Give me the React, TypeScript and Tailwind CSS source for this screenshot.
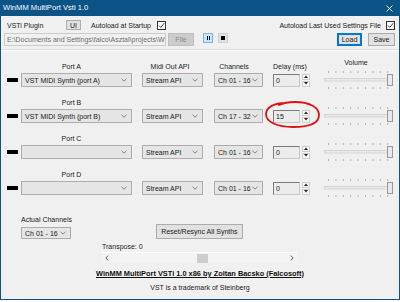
import React from "react";

const ports = [
  { name: "Port A", synth: "VST MIDI Synth (port A)", ch: "Ch 01 - 16", delay: "0" },
  { name: "Port B", synth: "VST MIDI Synth (port B)", ch: "Ch 17 - 32", delay: "15" },
  { name: "Port C", synth: "", ch: "Ch 01 - 16", delay: "0" },
  { name: "Port D", synth: "", ch: "Ch 01 - 16", delay: "0" },
];

function Chevron() {
  return (
    <svg width="6" height="4" viewBox="0 0 6 4" className="shrink-0">
      <path d="M0.5 0.8 L3 3.2 L5.5 0.8" fill="none" stroke="#6a6a6a" strokeWidth="0.8" />
    </svg>
  );
}

function Combo({ text, className }: { text: string; className: string }) {
  return (
    <div
      className={
        "flex items-center justify-between border border-[#adadad] bg-[#e5e5e5] pl-[3px] pr-[4px] text-[#1a1a1a] " +
        className
      }
    >
      <span className="whitespace-nowrap">{text}</span>
      <Chevron />
    </div>
  );
}

function Check() {
  return (
    <div className="flex h-[9px] w-[9px] items-center justify-center border border-[#333] bg-white">
      <svg width="7" height="7" viewBox="0 0 7 7">
        <path d="M1 3.6 L2.8 5.4 L6.2 1.2" fill="none" stroke="#222" strokeWidth="0.9" />
      </svg>
    </div>
  );
}

function Spin() {
  return (
    <div className="ml-[2px] flex h-[13px] w-[8px] flex-col gap-px">
      <div className="flex flex-1 items-center justify-center border border-[#d0d0d0] bg-[#f4f4f4]">
        <svg width="4" height="3" viewBox="0 0 4 3">
          <path d="M0 3 L2 0.5 L4 3 Z" fill="#222" />
        </svg>
      </div>
      <div className="flex flex-1 items-center justify-center border border-[#d0d0d0] bg-[#f4f4f4]">
        <svg width="4" height="3" viewBox="0 0 4 3">
          <path d="M0 0 L2 2.5 L4 0 Z" fill="#222" />
        </svg>
      </div>
    </div>
  );
}

function Slider() {
  const ticks = Array.from({ length: 9 }, (_, i) => 5 + i * 7.4);
  return (
    <svg width="70" height="18" viewBox="0 0 70 18" className="ml-[13px] -my-[2px] shrink-0">
      {ticks.map((x) => (
        <g key={x}>
          <rect x={x} y="0" width="1" height="2" fill="#b4b4b4" />
          <rect x={x} y="16" width="1" height="2" fill="#b4b4b4" />
        </g>
      ))}
      <rect x="1.5" y="7.5" width="64" height="2.5" fill="#e7eaea" stroke="#d6d6d6" strokeWidth="1" />
      <rect x="64.5" y="3.5" width="5" height="11" fill="#e8e8e8" stroke="#9a9a9a" strokeWidth="1" />
    </svg>
  );
}

function PortRow({ p }: { p: (typeof ports)[number] }) {
  return (
    <div className="flex h-[14px] items-center">
      <div className="ml-[6px] h-[4px] w-[11px] bg-black" />
      <Combo text={p.synth} className="ml-[3px] h-[14px] w-[111px]" />
      <Combo text="Stream API" className="ml-[10px] h-[14px] w-[61px]" />
      <Combo text={p.ch} className="ml-[11px] h-[14px] w-[49px]" />
      <div className="ml-[10px] flex h-[13px] w-[27px] items-center border border-[#7a7a7a] border-r-[#c8c8c8] border-b-[#c8c8c8] bg-[#ececec] pl-[2px]">
        {p.delay}
      </div>
      <Spin />
      <Slider />
    </div>
  );
}

export default function App() {
  return (
    <div className="h-[302px] w-[400px] bg-white font-['Liberation_Sans',Arial,sans-serif] text-[7px] leading-none text-[#1a1a1a]">
      <div className="flex h-[300px] w-[400px] flex-col bg-[#0c5386] px-[1px] pb-[1px]">
        {/* title bar */}
        <div className="flex h-[16px] shrink-0 items-center justify-between pl-[2px] pr-[6px] text-[7.6px] text-white">
          <span>WinMM MultiPort Vsti 1.0</span>
          <svg width="7" height="7" viewBox="0 0 7 7">
            <path d="M0.5 0.5 L6.5 6.5 M6.5 0.5 L0.5 6.5" stroke="#fff" strokeWidth="0.9" />
          </svg>
        </div>

        <div className="relative flex flex-1 flex-col bg-[#f0f0f0]">
          {/* plugin row */}
          <div className="mt-[3px] flex h-[12px] items-center pl-[6px] pr-[4px]">
            <span className="w-[59px]">VSTi Plugin</span>
            <div className="flex h-[10px] w-[15px] items-center justify-center border border-[#adadad] bg-[#e1e1e1]">UI</div>
            <span className="ml-[10px] w-[62px] whitespace-nowrap">Autoload at Startup</span>
            <div className="ml-[4px]">
              <Check />
            </div>
            <div className="flex-1" />
            <span className="whitespace-nowrap">Autoload Last Used Settings File</span>
            <div className="ml-[5px]">
              <Check />
            </div>
          </div>

          {/* path row */}
          <div className="mt-[2px] flex h-[13px] items-center pl-[3px] pr-[4px]">
            <div className="flex h-[13px] w-[162px] items-center overflow-hidden whitespace-nowrap border border-[#cccccc] bg-[#f0f0f0] pl-[2px] text-[#6d6d6d]">
              E:\Documents and Settings\falco\Asztal\projects\W
            </div>
            <div className="ml-[2px] flex h-[13px] w-[26px] items-center justify-center border border-[#bfbfbf] bg-[#cccccc] text-[#8a8a8a]">
              File
            </div>
            <div className="ml-[9px] flex h-[10px] w-[10px] items-center justify-center gap-px self-start border border-[#7eb4ea] bg-[#cce4f7]">
              <div className="h-[4px] w-px bg-black" />
              <div className="h-[4px] w-px bg-black" />
            </div>
            <div className="ml-[5px] flex h-[10px] w-[10px] items-center justify-center self-start border border-[#d0d0d0] bg-[#e1e1e1]">
              <div className="h-[4px] w-[4px] bg-black" />
            </div>
            <div className="flex-1" />
            <div className="flex h-[13px] w-[25px] items-center justify-center border border-[#0078d7] bg-[#e1e1e1] shadow-[inset_0_0_0_1px_#0078d7]">
              Load
            </div>
            <div className="ml-[6px] flex h-[13px] w-[27px] items-center justify-center border border-[#adadad] bg-[#e1e1e1]">
              Save
            </div>
          </div>

          <div className="mt-[3px] h-px bg-[#dadada]" />
          <div className="h-px bg-white" />

          {/* header labels */}
          <div className="mt-[8px] flex h-[14px] items-start">
            <span className="ml-[9px] mt-[4px] w-[123px] text-center leading-[8px]">Port A</span>
            <span className="ml-[7px] mt-[4px] w-[60px] text-center leading-[8px]">Midi Out API</span>
            <span className="ml-[10px] mt-[4px] w-[48px] text-center leading-[8px]">Channels</span>
            <span className="ml-[15px] mt-[4px] w-[40px] leading-[8px]">Delay (ms)</span>
            <span className="ml-[10px] w-[66px] text-center leading-[8px]">Volume</span>
          </div>
          <PortRow p={ports[0]} />

          {ports.slice(1).map((p) => (
            <React.Fragment key={p.name}>
              <div className="flex h-[22px] items-end pb-[2px]">
                <span className="ml-[9px] w-[123px] text-center leading-[8px]">{p.name}</span>
              </div>
              <PortRow p={p} />
            </React.Fragment>
          ))}

          {/* bottom controls */}
          <div className="mt-[20px] flex pl-[20px]">
            <div className="flex w-[135px] flex-col">
              <span className="h-[9px] leading-[9px]">Actual Channels</span>
              <Combo text="Ch 01 - 16" className="mt-[3px] h-[12px] w-[50px]" />
            </div>
            <div className="mt-[9px] flex h-[15px] w-[87px] items-center justify-center border border-[#adadad] bg-[#e1e1e1]">
              Reset/Resync All Synths
            </div>
          </div>

          <span className="ml-[101px] mt-[4px] leading-[8px]">Transpose: 0</span>
          <div className="ml-[101px] mt-[1px] flex h-[11px] w-[195px] items-center border-t border-white bg-[#f3f3f3] px-[3px]">
            <svg width="4" height="6" viewBox="0 0 4 6">
              <path d="M3.2 0.6 L0.9 3 L3.2 5.4" fill="none" stroke="#505050" strokeWidth="0.9" />
            </svg>
            <div className="ml-[88px] h-[9px] w-[11px] bg-[#cdcdcd]" />
            <div className="flex-1" />
            <svg width="4" height="6" viewBox="0 0 4 6">
              <path d="M0.8 0.6 L3.1 3 L0.8 5.4" fill="none" stroke="#505050" strokeWidth="0.9" />
            </svg>
          </div>

          <div className="mt-[6px] text-center text-[7.4px] font-bold leading-[10px] text-[#111] underline">
            WinMM MultiPort VSTi 1.0 x86 by Zoltan Bacsko (Falcosoft)
          </div>
          <div className="mt-[4px] text-center leading-[10px]">VST is a trademark of Steinberg</div>

          {/* red hand-drawn annotation */}
          <svg
            className="pointer-events-none absolute left-[262px] top-[84px]"
            width="60"
            height="30"
            viewBox="0 0 60 30"
          >
            <path
              d="M22 3 C12 3 3 7 3 14 C3 22 14 27 30 27 C46 27 56 23 56 15 C56 7 46 2 32 2 C26 2 20 3 16 5"
              fill="none"
              stroke="#e01010"
              strokeWidth="1.8"
              strokeLinecap="round"
            />
          </svg>
        </div>
      </div>
    </div>
  );
}
